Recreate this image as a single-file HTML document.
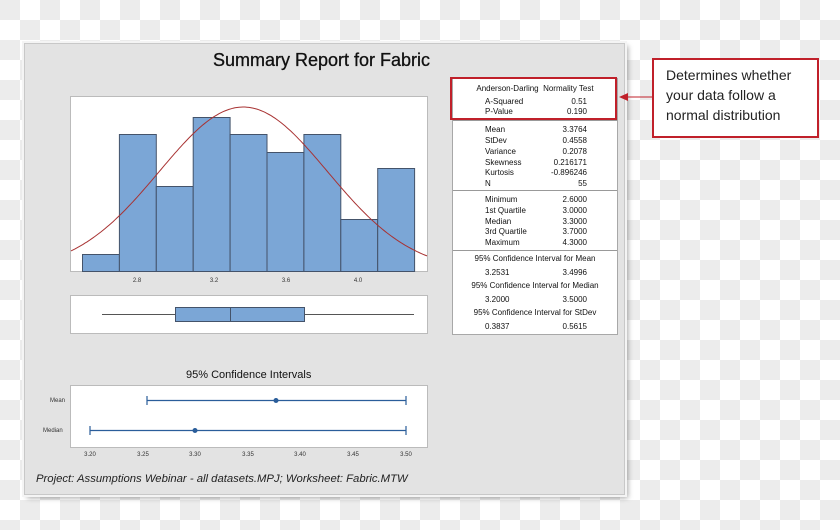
<!DOCTYPE html>
<html><head><meta charset="utf-8"><style>
html,body{margin:0;padding:0}
body{width:840px;height:530px;position:relative;overflow:hidden;font-family:"Liberation Sans",sans-serif;
background-color:#fff;
background-image:linear-gradient(45deg,#ececec 25%,transparent 25%,transparent 75%,#ececec 75%),linear-gradient(45deg,#ececec 25%,transparent 25%,transparent 75%,#ececec 75%);
background-size:40px 40px;background-position:20px 0,0 20px;}
.panel{position:absolute;left:24px;top:43px;width:599px;height:450px;background:#e3e3e3;border:1px solid #c8c8c8;outline:2px solid #f4f4f4;box-shadow:3px 3px 5px rgba(0,0,0,.35);}
.t{position:absolute;white-space:nowrap}
.stats{position:absolute;left:452px;top:78px;width:164px;height:255px;background:#fff;border:1px solid #a8a8a8;font-size:8px;color:#111}
.sec{position:absolute;left:0;width:164px;border-top:1px solid #999}
.row{position:absolute;left:0;width:164px;height:10px}
.row .a{position:absolute;left:32px}
.row .b{position:absolute;right:30px}
.c{position:absolute;left:0;width:164px;text-align:center}
</style></head><body>
<div class="panel"></div>
<div class="t" style="left:213px;top:50px;font-size:18px;color:#111;-webkit-text-stroke:0.3px #111">Summary Report for Fabric</div>
<svg style="position:absolute;left:0;top:0" width="840" height="530">
<rect x="70.5" y="96.5" width="357" height="175" fill="#fff" stroke="#bbb"/>
<g fill="#7ba6d6" stroke="#44536a" stroke-width="1">
<rect x="82.5" y="254.5" width="36.9" height="17"/>
<rect x="119.4" y="134.5" width="36.9" height="137"/>
<rect x="156.3" y="186.5" width="36.9" height="85"/>
<rect x="193.2" y="117.5" width="36.9" height="154"/>
<rect x="230.1" y="134.5" width="36.9" height="137"/>
<rect x="267" y="152.5" width="36.9" height="119"/>
<rect x="303.9" y="134.5" width="36.9" height="137"/>
<rect x="340.8" y="219.5" width="36.9" height="52"/>
<rect x="377.7" y="168.5" width="36.9" height="103"/>
</g>
<path id="curve" fill="none" stroke="#a83232" stroke-width="1"/>
<g font-size="6" fill="#333" text-anchor="middle"><text x="137" y="282">2.8</text><text x="214" y="282">3.2</text><text x="286" y="282">3.6</text><text x="358" y="282">4.0</text></g>
<rect x="70.5" y="295.5" width="357" height="38" fill="#fff" stroke="#bbb"/>
<line x1="102" y1="314.5" x2="414" y2="314.5" stroke="#555"/>
<rect x="175.5" y="307.5" width="129" height="14" fill="#7ba6d6" stroke="#44536a"/>
<line x1="230.5" y1="307" x2="230.5" y2="322" stroke="#44536a"/>
<rect x="70.5" y="385.5" width="357" height="62" fill="#fff" stroke="#bbb"/>
<g stroke="#2a5d9a" stroke-width="1.2">
<line x1="147" y1="400.5" x2="406" y2="400.5"/><line x1="147" y1="396" x2="147" y2="405"/><line x1="406" y1="396" x2="406" y2="405"/>
<line x1="90" y1="430.5" x2="406" y2="430.5"/><line x1="90" y1="426" x2="90" y2="435"/><line x1="406" y1="426" x2="406" y2="435"/>
</g>
<circle cx="276" cy="400.5" r="2.5" fill="#2a5d9a"/><circle cx="195" cy="430.5" r="2.5" fill="#2a5d9a"/>
<g font-size="6" fill="#333"><text x="50" y="402">Mean</text><text x="43" y="432">Median</text></g>
<g font-size="6" fill="#333" text-anchor="middle"><text x="90" y="456">3.20</text><text x="143" y="456">3.25</text><text x="195" y="456">3.30</text><text x="248" y="456">3.35</text><text x="300" y="456">3.40</text><text x="353" y="456">3.45</text><text x="406" y="456">3.50</text></g>
<line x1="652" y1="97" x2="626" y2="97" stroke="#c0202a" stroke-width="1"/>
<polygon points="619,97 628,93 628,101" fill="#c0202a"/>
</svg>
<div class="t" style="left:186px;top:369px;font-size:11px;color:#111">95% Confidence Intervals</div>
<div class="t" style="left:36px;top:473px;font-size:11.3px;font-style:italic;color:#222">Project: Assumptions Webinar - all datasets.MPJ; Worksheet: Fabric.MTW</div>
<div class="stats">
<div class="c" style="top:5px">Anderson-Darling&nbsp; Normality Test</div>
<div class="row" style="top:18px"><span class="a">A-Squared</span><span class="b">0.51</span></div>
<div class="row" style="top:28px"><span class="a">P-Value</span><span class="b">0.190</span></div>
<div class="sec" style="top:41px"></div>
<div class="row" style="top:46px"><span class="a">Mean</span><span class="b">3.3764</span></div>
<div class="row" style="top:57px"><span class="a">StDev</span><span class="b">0.4558</span></div>
<div class="row" style="top:68px"><span class="a">Variance</span><span class="b">0.2078</span></div>
<div class="row" style="top:79px"><span class="a">Skewness</span><span class="b">0.216171</span></div>
<div class="row" style="top:89px"><span class="a">Kurtosis</span><span class="b">-0.896246</span></div>
<div class="row" style="top:100px"><span class="a">N</span><span class="b">55</span></div>
<div class="sec" style="top:111px"></div>
<div class="row" style="top:116px"><span class="a">Minimum</span><span class="b">2.6000</span></div>
<div class="row" style="top:127px"><span class="a">1st Quartile</span><span class="b">3.0000</span></div>
<div class="row" style="top:138px"><span class="a">Median</span><span class="b">3.3000</span></div>
<div class="row" style="top:148px"><span class="a">3rd Quartile</span><span class="b">3.7000</span></div>
<div class="row" style="top:159px"><span class="a">Maximum</span><span class="b">4.3000</span></div>
<div class="sec" style="top:171px"></div>
<div class="c" style="top:175px">95% Confidence Interval for Mean</div>
<div class="row" style="top:189px"><span class="a">3.2531</span><span class="b">3.4996</span></div>
<div class="c" style="top:202px">95% Confidence Interval for Median</div>
<div class="row" style="top:216px"><span class="a">3.2000</span><span class="b">3.5000</span></div>
<div class="c" style="top:229px">95% Confidence Interval for StDev</div>
<div class="row" style="top:243px"><span class="a">0.3837</span><span class="b">0.5615</span></div>
</div>
<div style="position:absolute;left:450px;top:77px;width:163px;height:39px;border:2px solid #c0202a"></div>
<div style="position:absolute;left:652px;top:58px;width:163px;height:76px;border:2px solid #c0202a;background:#fff"></div>
<div class="t" style="left:666px;top:65px;font-size:14px;line-height:20px;color:#222">Determines whether<br>your data follow a<br>normal distribution</div>
<script>
var d="",m=3.3764,s=0.4558;
for(var x=71;x<=427;x+=2){var v=2.8+(x-137)/184.5;var y=271-164*Math.exp(-0.5*Math.pow((v-m)/s,2));d+=(d?"L":"M")+x+","+y.toFixed(1);}
document.getElementById("curve").setAttribute("d",d);
</script>
</body></html>
